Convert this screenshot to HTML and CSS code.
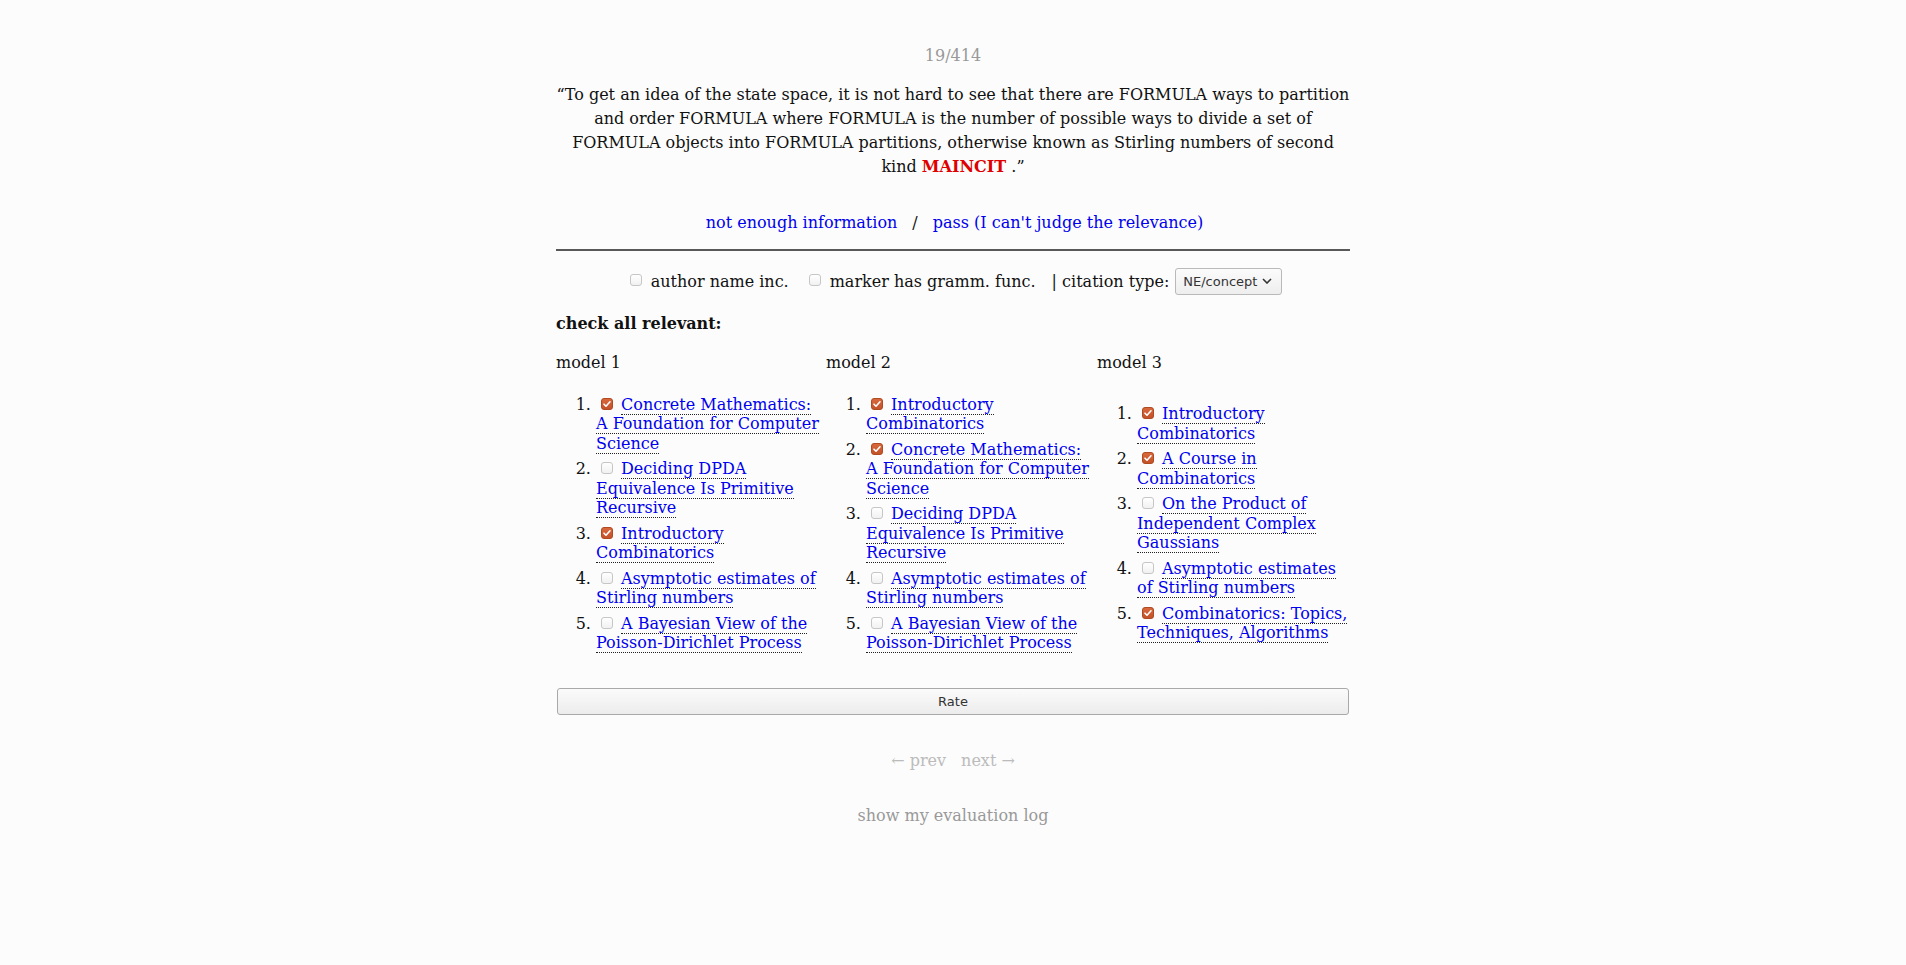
FILE: index.html
```html
<!DOCTYPE html>
<html>
<head>
<meta charset="utf-8">
<title>Rate</title>
<link rel="stylesheet" href="styles.css">
</head>
<body>
<div class="wrap">
  <div class="counter">19/414</div>
  <p class="quote">“To get an idea of the state space, it is not hard to see that there are FORMULA ways to partition and order FORMULA where FORMULA is the number of possible ways to divide a set of FORMULA objects into FORMULA partitions, otherwise known as Stirling numbers of second kind <span class="maincit">MAINCIT</span> .”</p>
  <div class="choices"><a href="#">not enough information</a><span class="sep">/</span><a href="#">pass (I can't judge the relevance)</a></div>
  <hr class="rule">
  <div class="flags">
    <label class="flag"><input type="checkbox" class="cb"><span>author name inc.</span></label>
    <label class="flag"><input type="checkbox" class="cb"><span>marker has gramm. func.</span></label>
    <span class="ctype">| citation type:</span>
    <select class="sel"><option>NE/concept</option></select>
  </div>
  <div class="heading">check all relevant:</div>
  <div class="models">
    <div class="mhead">model 1</div>
    <div class="mhead">model 2</div>
    <div class="mhead">model 3</div>
    <ol class="mlist">
      <li><input type="checkbox" class="cb" checked><a href="#">Concrete Mathematics: A Foundation for Computer Science</a></li>
      <li><input type="checkbox" class="cb"><a href="#">Deciding DPDA Equivalence Is Primitive Recursive</a></li>
      <li><input type="checkbox" class="cb" checked><a href="#">Introductory Combinatorics</a></li>
      <li><input type="checkbox" class="cb"><a href="#">Asymptotic estimates of Stirling numbers</a></li>
      <li><input type="checkbox" class="cb"><a href="#">A Bayesian View of the Poisson-Dirichlet Process</a></li>
    </ol>
    <ol class="mlist">
      <li><input type="checkbox" class="cb" checked><a href="#">Introductory Combinatorics</a></li>
      <li><input type="checkbox" class="cb" checked><a href="#">Concrete Mathematics: A Foundation for Computer Science</a></li>
      <li><input type="checkbox" class="cb"><a href="#">Deciding DPDA Equivalence Is Primitive Recursive</a></li>
      <li><input type="checkbox" class="cb"><a href="#">Asymptotic estimates of Stirling numbers</a></li>
      <li><input type="checkbox" class="cb"><a href="#">A Bayesian View of the Poisson-Dirichlet Process</a></li>
    </ol>
    <ol class="mlist last">
      <li><input type="checkbox" class="cb" checked><a href="#">Introductory Combinatorics</a></li>
      <li><input type="checkbox" class="cb" checked><a href="#">A Course in Combinatorics</a></li>
      <li><input type="checkbox" class="cb"><a href="#">On the Product of Independent Complex Gaussians</a></li>
      <li><input type="checkbox" class="cb"><a href="#">Asymptotic estimates of Stirling numbers</a></li>
      <li><input type="checkbox" class="cb" checked><a href="#">Combinatorics: Topics, Techniques, Algorithms</a></li>
    </ol>
  </div>
  <button class="rate">Rate</button>
  <div class="nav"><span>← prev</span><span>next →</span></div>
  <div class="log">show my evaluation log</div>
</div>
</body>
</html>
```
FILE: styles.css
```css
html, body {
  margin: 0;
  padding: 0;
  background: #fcfcfc;
}
body {
  font-family: "DejaVu Serif", serif;
  font-size: 16px;
  color: #111;
}
.wrap {
  width: 794px;
  margin: 0 auto;
  padding-top: 44px;
}
.counter {
  text-align: center;
  line-height: 24px;
  color: #999;
}
.quote {
  margin: 14.5px -2px 0;
  text-align: center;
  line-height: 24.3px;
}
.maincit {
  color: #e00000;
  font-weight: bold;
}
.choices {
  margin-top: 31.5px;
  text-align: center;
  line-height: 24px;
  padding-left: 3px;
}
.choices a {
  color: #0000ee;
  text-decoration: none;
}
.sep {
  margin: 0 15px;
}
.rule {
  margin: 14px 0 0;
  border: none;
  border-top: 2px solid #585858;
  height: 0;
}
.flags {
  margin-top: 16.5px;
  height: 27px;
  display: flex;
  justify-content: center;
  align-items: center;
  padding-left: 6px;
}
.flag {
  display: inline-flex;
  align-items: center;
  margin-right: 20px;
}
.flag .cb {
  margin: 0 9px 2px 0;
}
.flag:nth-child(2) {
  margin-right: 16px;
}
.ctype {
  margin-right: 6px;
}
.sel {
  appearance: none;
  -webkit-appearance: none;
  width: 107px;
  height: 27px;
  border: 1px solid #b9b9b9;
  border-radius: 3px;
  background-color: #f6f6f6;
  background-image: url("data:image/svg+xml,%3Csvg xmlns='http://www.w3.org/2000/svg' width='10' height='6' viewBox='0 0 10 6'%3E%3Cpath d='M1 1l4 4 4-4' fill='none' stroke='%23333' stroke-width='1.6'/%3E%3C/svg%3E"), linear-gradient(#fbfbfb, #eeeeee);
  background-repeat: no-repeat, no-repeat;
  background-position: right 9px center, 0 0;
  font-family: "DejaVu Sans", sans-serif;
  font-size: 13px;
  color: #333;
  padding: 0 0 0 7px;
}
.heading {
  margin-top: 17px;
  line-height: 24px;
  font-weight: bold;
}
.models {
  margin-top: 15px;
  display: grid;
  grid-template-columns: 270px 271px 253px;
  align-items: center;
  row-gap: 20px;
}
.mhead {
  line-height: 24px;
}
.mlist {
  margin: 0;
  padding-left: 40px;
  padding-right: 2px;
  line-height: 19.4px;
  color: #111;
}
.mlist.last {
  padding-right: 0;
  margin-right: -1px;
}
.mlist li {
  margin-bottom: 6.2px;
}
.mlist li:last-child {
  margin-bottom: 0;
}
.mlist a {
  color: #0000ee;
  text-decoration: none;
  border-bottom: 1px dotted #222;
}
.mlist .cb {
  margin: 0 8px 0 5px;
  vertical-align: 0;
}
.cb {
  appearance: none;
  -webkit-appearance: none;
  width: 12px;
  height: 12px;
  border: 1px solid #c6c6c6;
  border-radius: 3px;
  background: linear-gradient(#ffffff, #f1f1f1);
  box-sizing: border-box;
  display: inline-block;
}
.cb:checked {
  border-color: #b04a22;
  background-color: #cf5a2e;
  background-image: url("data:image/svg+xml,%3Csvg xmlns='http://www.w3.org/2000/svg' width='12' height='12' viewBox='0 0 12 12'%3E%3Cpath d='M3 6.2l2 2 4-4.4' fill='none' stroke='%23fff' stroke-width='1.6' stroke-linecap='round' stroke-linejoin='round'/%3E%3C/svg%3E"), linear-gradient(#d8683c, #c4522a);
  background-repeat: no-repeat;
  background-position: center, 0 0;
}
.rate {
  display: block;
  width: 792px;
  height: 27px;
  margin: 36px auto 0;
  border: 1px solid #a9a9a9;
  border-radius: 3px;
  background: linear-gradient(#fbfbfb, #ececec);
  font-family: "DejaVu Sans", sans-serif;
  font-size: 13px;
  color: #333;
}
.nav {
  margin-top: 34px;
  line-height: 24px;
  text-align: center;
  color: #bbbbbb;
  display: flex;
  justify-content: center;
  gap: 15px;
}
.log {
  margin-top: 31px;
  line-height: 24px;
  text-align: center;
  color: #999;
}
```
